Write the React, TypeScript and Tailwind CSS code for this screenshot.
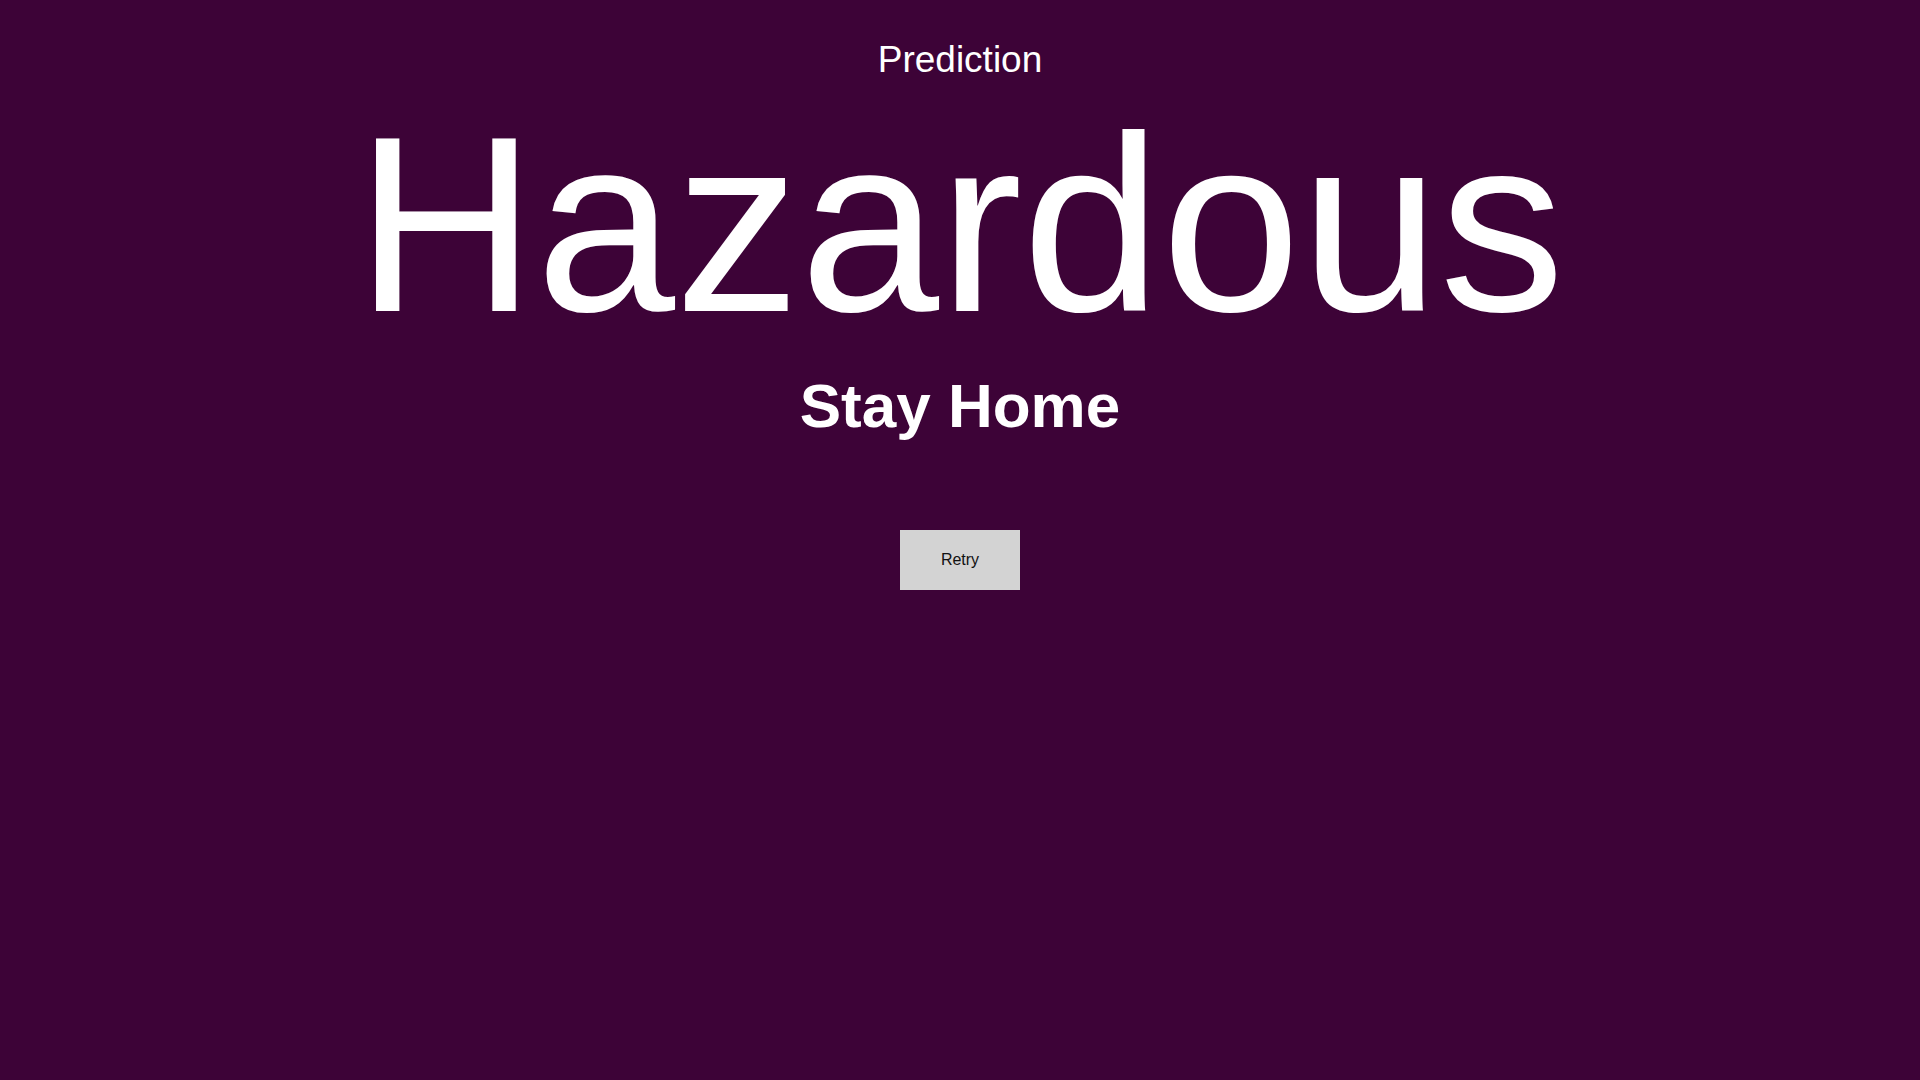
import React from "react"

export default function App() {
  return (
    <div
      className="min-h-screen w-full bg-[#3d0337] flex flex-col items-center text-white"
      style={{ fontFamily: '"Liberation Sans", Arial, sans-serif' }}
    >
      <h2 className="mt-[41px] text-[37px] leading-none">Prediction</h2>
      <h1 className="mt-[22px] text-[250px] leading-none">Hazardous</h1>
      <h3 className="mt-[25px] text-[62px] leading-none font-bold">Stay Home</h3>
      <button className="mt-[93px] w-[120px] h-[60px] bg-[#d3d3d3] text-[16px] text-[#111] cursor-pointer">
        Retry
      </button>
    </div>
  )
}
